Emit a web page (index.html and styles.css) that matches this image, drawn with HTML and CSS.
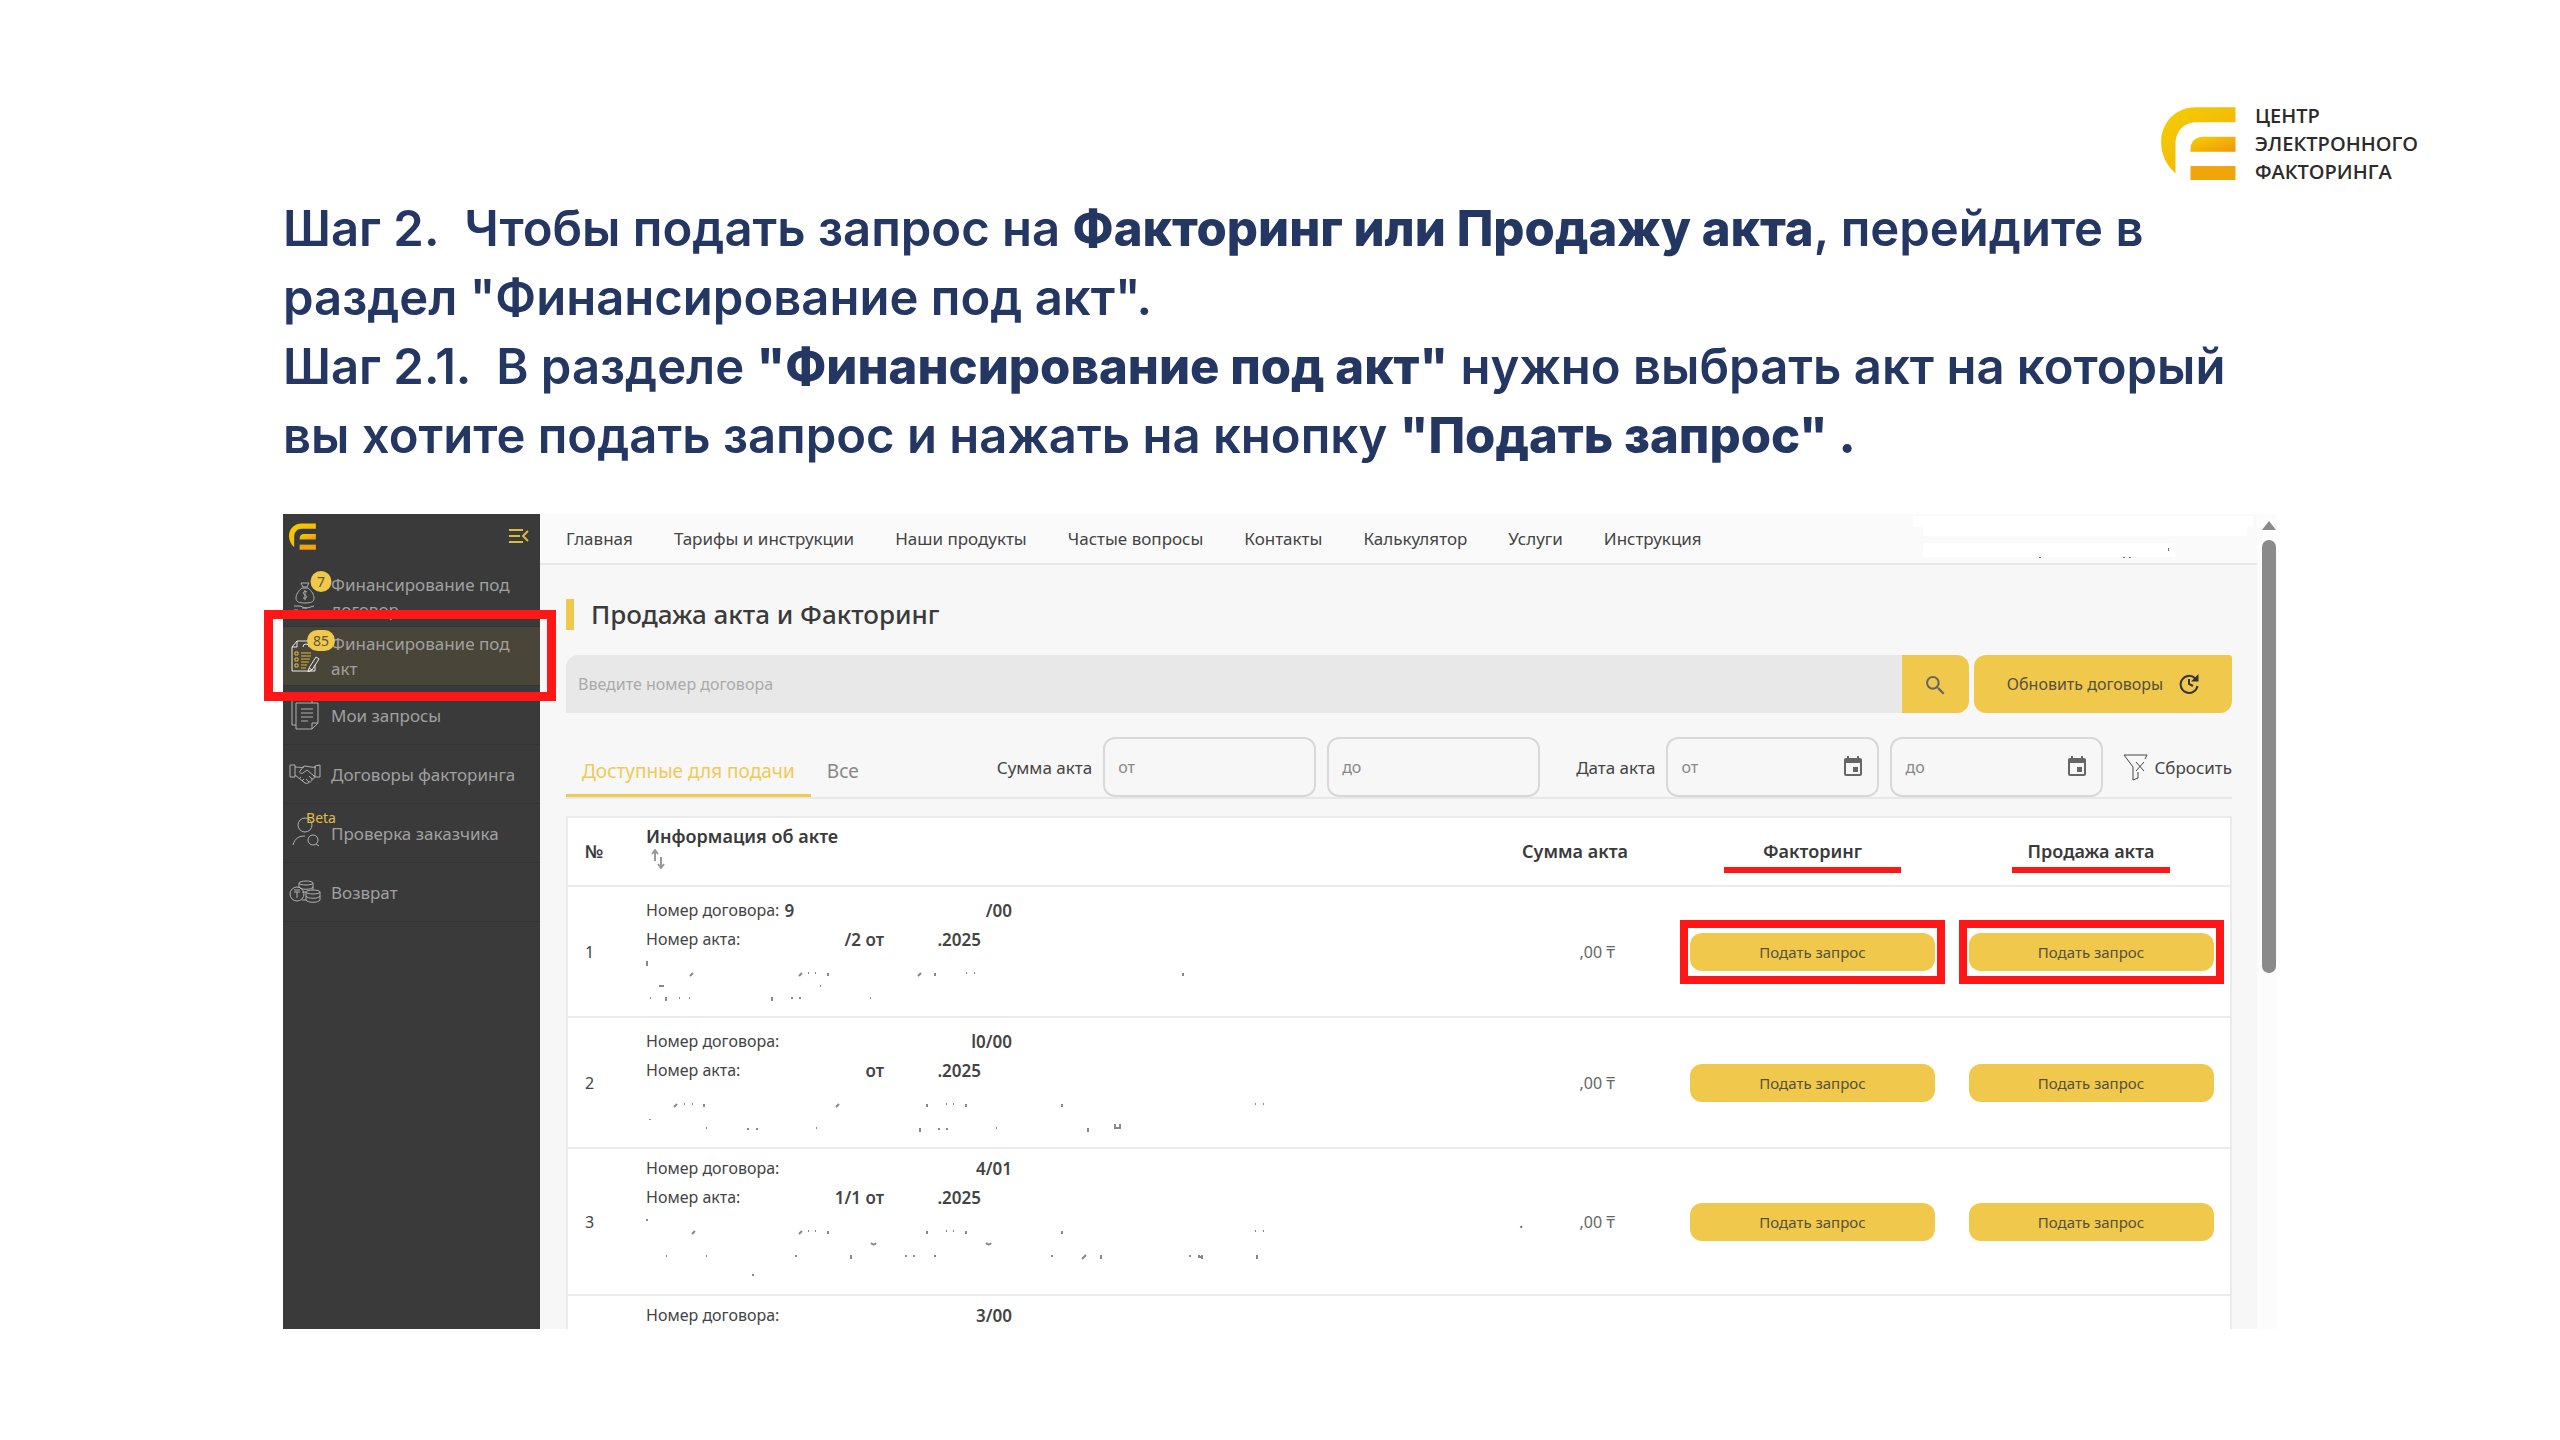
FILE: index.html
```html
<!DOCTYPE html>
<html lang="ru">
<head>
    <meta charset="UTF-8">
    <meta name="viewport" content="width=device-width, initial-scale=1.0">
    <title>Финансирование под акт</title>
    <link rel="stylesheet" href="styles.css">
</head>
<body>

    <!-- общие фигуры -->
    <svg class="defs" aria-hidden="true">
        <defs>
            <linearGradient id="gold" x1="0" y1="0" x2="1" y2="1">
                <stop offset="0" stop-color="#f7d000"/>
                <stop offset="1" stop-color="#ee960f"/>
            </linearGradient>
            <linearGradient id="goldArc" x1="0" y1="0" x2="1" y2="1">
                <stop offset="0" stop-color="#f5cd02"/>
                <stop offset="1" stop-color="#f1b00c"/>
            </linearGradient>
        </defs>
        <symbol id="logo" viewBox="62 51 224 219">
            <path fill="url(#goldArc)" d="M285 52H165C105 52 62 98 62 157c0 38 17 71 43 93v-88c0-37 25-65 62-65h118z"/>
            <path fill="url(#gold)" d="M150 185v-8c0-22 15-37 37-37h98v45z"/>
            <path fill="#f1a50c" d="M150 228h135v42H150z"/>
        </symbol>
        <symbol id="calendar" viewBox="0 0 24 24">
            <path d="M17 12h-5v5h5v-5zM16 1v2H8V1H6v2H5c-1.110 0-2 .9-2 2v14a2 2 0 0 0 2 2h14c1.100 0 2-.9 2-2V5c0-1.100-.9-2-2-2h-1V1h-2zm3 18H5V8h14v11z"/>
        </symbol>
    </svg>

    <header class="brand">
        <svg class="brand-logo"><use href="#logo"/></svg>
        <div class="brand-name">ЦЕНТР<br>ЭЛЕКТРОННОГО<br>ФАКТОРИНГА</div>
    </header>

    <section class="steps">
        <p>Шаг 2.&nbsp; Чтобы подать запрос на <b>Факторинг или Продажу акта</b>, перейдите в<br>раздел "Финансирование под акт".</p>
        <p>Шаг 2.1.&nbsp; В разделе <b>"Финансирование под акт"</b> нужно выбрать акт на который<br>вы хотите подать запрос и нажать на кнопку <b>"Подать запрос" .</b></p>
    </section>

    <div class="app-wrap">
        <div class="app">
            <aside class="sidebar">
                <div class="sidebar-top">
                    <svg class="sidebar-logo"><use href="#logo"/></svg>
                    <button class="collapse" aria-label="Свернуть меню">
                        <svg viewBox="0 0 20 14" width="20" height="14"><path d="M0 1h14M0 7h11M0 13h14M19 2l-5 5 5 5" fill="none" stroke="#dcb844" stroke-width="2"/></svg>
                    </button>
                </div>
                <a class="side-item" href="#">
                    <svg class="side-icon" viewBox="0 0 32 32">
                        <path d="M12 2h8l-2 4h-4zM13 7h6c4 3 6 7 6 10 0 4-3 5-9 5s-9-1-9-5c0-3 2-7 6-10zM18 11c-4-2-5 2-2 3s2 4-2 3M16 9v10M5 25h5c3 0 4 2 8 2h-5M18 27l7-2M5 29h4"/>
                    </svg>
                    <span class="badge">7</span>
                    <span>Финансирование под договор</span>
                </a>
                <a class="side-item active" href="#">
                    <svg class="side-icon" viewBox="0 0 32 32">
                        <path d="M8 1h15M8 1L3 7v24h23v-6M8 1v6H3M14 7a3 3 0 0 1 6 0M27 17l-7 11-1 4 4-2 7-11zM20 28l3 2"/>
                        <path class="gold-line" d="M6 12h3v3H6zM6 18h3v3H6zM6 24h3v3H6zM12 13h10M12 16h10M12 19h9M12 22h8M12 25h6M12 28h5"/>
                    </svg>
                    <span class="badge">85</span>
                    <span>Финансирование под акт</span>
                </a>
                <a class="side-item" href="#">
                    <svg class="side-icon" viewBox="0 0 32 32">
                        <path d="M7 4h22v20l-6 6H7zM29 24h-6v6M7 26H3V1h20v3M12 10h12M12 14h12M12 18h12M12 22h7"/>
                    </svg>
                    <span>Мои запросы</span>
                </a>
                <a class="side-item" href="#">
                    <svg class="side-icon" viewBox="0 0 32 32">
                        <path d="M1 7h5v12H1zM26 8l5-1v12h-5zM6 9c4 0 6 1 9 0M6 17l10 8c2 1 4 0 4-1 2 0 3-1 3-3 2 0 3-1 2-3l-7-6-4 3c-2 1-4 0-3-2l4-5c4 0 8 2 12 1M25 18h1M17 21l3 3M20 18l3 3M10 21l2-2M13 23l2-2"/>
                    </svg>
                    <span>Договоры факторинга</span>
                </a>
                <a class="side-item" href="#">
                    <svg class="side-icon" viewBox="0 0 32 32">
                        <circle cx="16" cy="8" r="7"/><path d="M4 28c2-7 6-9 12-9"/><circle cx="24" cy="23" r="5"/><path d="M27 27l3 2"/>
                    </svg>
                    <span class="beta">Beta</span>
                    <span>Проверка заказчика</span>
                </a>
                <a class="side-item" href="#">
                    <svg class="side-icon" viewBox="0 0 32 32">
                        <circle cx="8" cy="18" r="7"/><path d="M5 14h6M5 16h6M8 16v6"/>
                        <ellipse cx="17" cy="7" rx="7" ry="2"/><path d="M10 7v4c1 3 13 3 14 0V7M24 11v3M13 16h4"/>
                        <ellipse cx="24" cy="16" rx="7" ry="2"/><path d="M17 16v8c1 3 13 3 14 0v-8M17 20c1 3 13 3 14 0M13 24h4"/>
                    </svg>
                    <span>Возврат</span>
                </a>
            </aside>

            <main class="main">
                <nav class="topnav">
                    <a href="#">Главная</a>
                    <a href="#">Тарифы и инструкции</a>
                    <a href="#">Наши продукты</a>
                    <a href="#">Частые вопросы</a>
                    <a href="#">Контакты</a>
                    <a href="#">Калькулятор</a>
                    <a href="#">Услуги</a>
                    <a href="#">Инструкция</a>
                    <svg class="account" viewBox="0 0 340 42" width="340" height="42" aria-hidden="true">
                        <path fill="#fff" d="M0 0h340v11h-6v9H10v-9H0zM10 27h252v14H10z"/>
                        <path fill="#777" d="M126 41h2v1h-2zM210 41h2v1h-2zM216 41h2v1h-2zM255 32h1v3h-1z"/>
                    </svg>
                </nav>

                <div class="content">
                    <h1 class="title">Продажа акта и Факторинг</h1>

                    <div class="search-row">
                        <div class="search">
                            <input type="text" aria-label="Номер договора" placeholder="Введите номер договора">
                            <button class="search-btn" aria-label="Найти">
                                <svg viewBox="3 3 18 18" width="19" height="19"><path d="M15.500 14h-.79l-.28-.27A6.470 6.470 0 0 0 16 9.500 6.500 6.500 0 1 0 9.500 16c1.610 0 3.090-.59 4.230-1.570l.27.28v.79l5 4.990L20.490 19l-4.990-5zm-6 0C7.010 14 5 11.990 5 9.500S7.010 5 9.500 5 14 7.010 14 9.500 11.990 14 9.500 14z"/></svg>
                            </button>
                        </div>
                        <button class="update-btn">Обновить договоры
                            <svg viewBox="0 0 20 20" width="20" height="20"><path d="M16 4.200A8.500 8.500 0 1 0 18.500 12M10 5v5l4 2" fill="none" stroke="#333" stroke-width="2"/><path d="M19.500 0v7.500H12z" fill="#333"/></svg>
                        </button>
                    </div>

                    <div class="filters">
                        <div class="tabs">
                            <button class="tab selected">Доступные для подачи</button>
                            <button class="tab">Все</button>
                        </div>
                        <div class="range">
                            <label for="sumFrom">Сумма акта</label>
                            <div class="field"><input id="sumFrom" type="text" placeholder="от"></div>
                            <div class="field"><input type="text" aria-label="Сумма до" placeholder="до"></div>
                        </div>
                        <div class="range">
                            <label for="dateFrom">Дата акта</label>
                            <div class="field"><input id="dateFrom" type="text" placeholder="от"><svg class="cal"><use href="#calendar"/></svg></div>
                            <div class="field"><input type="text" aria-label="Дата до" placeholder="до"><svg class="cal"><use href="#calendar"/></svg></div>
                        </div>
                        <button class="reset">
                            <svg viewBox="0 0 25 27" width="25" height="27"><path d="M22 5l2-4H1l9 12v13l5-2v-6M13 8l8 9M21 8l-8 9" fill="none" stroke="#444"/></svg>
                            Сбросить
                        </button>
                    </div>

                    <table class="acts">
                        <colgroup><col class="c-num"><col><col class="c-sum"><col class="c-act"><col class="c-act"></colgroup>
                        <thead>
                            <tr>
                                <th>№</th>
                                <th class="sortable">Информация об акте
                                    <svg class="sort" viewBox="0 0 14 20" width="14" height="20"><path d="M4 12V2M1 5l3-4 3 4M10 8v10M7 15l3 4 3-4" fill="none" stroke="#999" stroke-width="2"/></svg>
                                </th>
                                <th class="center">Сумма акта</th>
                                <th class="center"><span class="mark mark-wide">Факторинг</span></th>
                                <th class="center"><span class="mark">Продажа акта</span></th>
                            </tr>
                        </thead>
                        <tbody>
                            <tr>
                                <td>1</td>
                                <td class="info">
                                    <div class="line"><span>Номер договора:</span><b class="lead">9</b><b class="no">/00</b></div>
                                    <div class="line"><span>Номер акта:</span><b class="act">/2 от</b><b class="date">.2025</b></div>
                                    <svg class="specks" viewBox="0 0 640 50" height="50" width="640"><path d="M1 5v5M44 20l3-3M153 20l3-3M162 17h1M169 17h1M182 17v3M272 20l3-3M289 17v3M320 17h1M328 17h1M537 17v3M13 30h5M174 30h1M20 41v4M126 41v4M145 42h2M153 42h2M4 42h1M33 42h1M43 42h1M224 42h1"/></svg>
                                </td>
                                <td><div class="sum">,00 ₸</div></td>
                                <td class="center"><div class="callout"><button class="send">Подать запрос</button></div></td>
                                <td class="center"><div class="callout"><button class="send">Подать запрос</button></div></td>
                            </tr>
                            <tr>
                                <td>2</td>
                                <td class="info">
                                    <div class="line"><span>Номер договора:</span><b class="no">l0/00</b></div>
                                    <div class="line"><span>Номер акта:</span><b class="act">от</b><b class="date">.2025</b></div>
                                    <svg class="specks" viewBox="0 0 640 50" height="50" width="640"><path d="M28 20l3-3M38 17h1M46 17h1M58 17v3M190 20l3-3M281 17v3M300 17h1M307 17h1M320 17v3M416 17v3M609 17h1M617 17h1M4 32v1M102 41v2M111 41v2M274 41v4M293 41v2M301 41v2M442 41v4M469 37v4h5v-4M60 41h1M170 41h1M350 41h1"/></svg>
                                </td>
                                <td><div class="sum">,00 ₸</div></td>
                                <td class="center"><button class="send">Подать запрос</button></td>
                                <td class="center"><button class="send">Подать запрос</button></td>
                            </tr>
                            <tr class="tall">
                                <td>3</td>
                                <td class="info">
                                    <div class="line"><span>Номер договора:</span><b class="no">4/01</b></div>
                                    <div class="line"><span>Номер акта:</span><b class="act">1/1 от</b><b class="date">.2025</b></div>
                                    <svg class="specks" viewBox="0 0 640 70" height="70" width="640"><path d="M1 5v2M46 20l3-3M153 20l3-3M162 17h1M169 17h1M182 17v3M281 17v3M300 17h1M307 17h1M320 17v3M416 17v3M609 17h1M617 17h1M225 29q3 3 5 0M340 29q3 3 5 0M150 41v2M205 41v4M260 41v2M268 41v2M289 41v2M406 41v2M436 45l4-4M455 41v4M544 41v2M553 41v2h3v-2v4M611 41v4M107 60v2M20 42h1M60 42h1"/></svg>
                                </td>
                                <td><div class="sum"><span>.</span>,00 ₸</div></td>
                                <td class="center"><button class="send">Подать запрос</button></td>
                                <td class="center"><button class="send">Подать запрос</button></td>
                            </tr>
                            <tr class="tall">
                                <td></td>
                                <td class="info">
                                    <div class="line"><span>Номер договора:</span><b class="no">3/00</b></div>
                                </td>
                                <td></td>
                                <td></td>
                                <td></td>
                            </tr>
                        </tbody>
                    </table>
                </div>
            </main>

            <div class="scrollbar" aria-hidden="true">
                <div class="arrow"></div>
                <div class="thumb"></div>
            </div>
        </div>
        <div class="callout-menu"></div>
    </div>

</body>
</html>
```
FILE: styles.css
```css
* {
    box-sizing: border-box;
}

body {
    margin: 0;
    height: 100vh;
    padding-bottom: 111px;
    display: flex;
    flex-direction: column;
    background-color: #fff;
    color: #444;
    font-family: 'Noto Sans', 'Open Sans', sans-serif;
    font-size: 16px;
}

a {
    color: inherit;
    text-decoration: none;
}

button {
    border: none;
    padding: 0;
    background: none;
    color: inherit;
    font: inherit;
    cursor: pointer;
}

input {
    font: inherit;
    color: #444;
}

.defs {
    position: absolute;
    width: 0;
    height: 0;
}

/* шапка слайда */
.brand {
    display: flex;
    justify-content: flex-end;
    gap: 19px;
    padding: 102px 142px 0;
}

.brand-logo {
    width: 75px;
    height: 73px;
    margin-top: 5px;
}

.brand-name {
    color: #2f2b2a;
    font-family: 'Open Sans', sans-serif;
    font-size: 20px;
    font-weight: 600;
    line-height: 28px;
}

.steps {
    margin: 8px 283px 44px;
    color: #243763;
    font-family: Inter, sans-serif;
    font-size: 49px;
    font-weight: 600;
    line-height: 69px;
    white-space: nowrap;
}

.steps p {
    margin: 0;
}

.steps b {
    font-weight: 800;
}

/* окно приложения */
.app-wrap {
    position: relative;
    flex: 1;
    min-height: 0;
    margin: 0 283px;
}

.app {
    display: flex;
    height: 100%;
    overflow: hidden;
    background-color: #f7f7f7;
}

.sidebar {
    flex: 0 0 257px;
    background-color: #3a3a3a;
    color: #a0a0a0;
    font-size: 17px;
    line-height: 25px;
}

.sidebar-top {
    display: flex;
    justify-content: space-between;
    align-items: center;
    height: 54px;
    padding: 0 11px 10px 6px;
}

.sidebar-logo {
    width: 27px;
    height: 27px;
}

.collapse {
    display: flex;
}

.side-item {
    position: relative;
    display: flex;
    align-items: center;
    gap: 10px;
    height: 59px;
    padding: 0 12px 0 6px;
    border-bottom: 1px solid #333;
}

.side-item.active {
    background-color: #494538;
}

.side-icon {
    flex: none;
    width: 32px;
    height: 32px;
    fill: none;
    stroke: #b0b0b0;
}

.active .side-icon {
    stroke: #e8e8e8;
}

.active .side-icon .gold-line {
    stroke: #e0bb45;
}

.badge,
.beta {
    position: absolute;
    top: 3px;
    left: 38px;
    transform: translateX(-50%);
    font-size: 14px;
    line-height: 21px;
}

.badge {
    min-width: 21px;
    padding: 0 6px;
    border-radius: 11px;
    background-color: #f0c94c;
    color: #5d5433;
    text-align: center;
}

.beta {
    color: #e0bb45;
}

.main {
    flex: 1;
    min-width: 0;
}

.topnav {
    display: flex;
    align-items: center;
    gap: 41px;
    height: 51px;
    padding: 0 4px 0 26px;
    border-bottom: 2px solid #e8e8e8;
    background-color: #fafafa;
    font-size: 17px;
    white-space: nowrap;
}

.account {
    margin: 2px 0 6px auto;
}

.content {
    padding: 34px 25px 0 26px;
}

.title {
    margin: 0 0 25px;
    padding-left: 17px;
    border-left: 8px solid #f0c94c;
    color: #3a3a3a;
    font-size: 26px;
    font-weight: 500;
    line-height: 31px;
}

.search-row {
    display: flex;
    gap: 5px;
    height: 58px;
}

.search {
    flex: 1;
    display: flex;
    border-radius: 12px 12px 12px 0;
    overflow: hidden;
}

.search input {
    flex: 1;
    padding: 0 12px;
    border: none;
    background-color: #e8e8e8;
}

::placeholder {
    color: #aaa;
    opacity: 1;
}

.search-btn {
    width: 67px;
    background-color: #f0c94c;
    fill: #666;
}

.search-btn svg {
    vertical-align: middle;
}

.update-btn {
    display: flex;
    align-items: center;
    justify-content: center;
    gap: 16px;
    width: 258px;
    border-radius: 12px 3px 12px 12px;
    background-color: #f0c94c;
    color: #55503c;
}

.filters {
    display: flex;
    height: 62px;
    margin: 24px 0 17px;
    border-bottom: 2px solid #e8e8e8;
}

.tabs {
    display: flex;
    flex: 1;
}

.tab {
    padding: 10px 16px 0;
    color: #888;
    font-size: 19px;
    border-bottom: 3px solid transparent;
}

.tab.selected {
    border-color: #efca55;
    color: #efca55;
}

.range {
    display: flex;
    align-items: center;
    gap: 11px;
    margin-right: 20px;
}

.range + .range {
    margin-left: 16px;
}

.range label,
.reset {
    font-size: 17px;
}

.field {
    display: flex;
    align-items: center;
    width: 213px;
    height: 60px;
    padding: 0 12px 0 13px;
    border: 2px solid #d8d8d8;
    border-radius: 12px;
}

.field input {
    flex: 1;
    min-width: 0;
    padding: 0;
    border: none;
    background: none;
}

.field ::placeholder {
    color: #888;
}

.cal {
    width: 24px;
    height: 24px;
    fill: #666;
}

.reset {
    display: flex;
    align-items: center;
    gap: 6px;
}

.acts {
    width: 100%;
    table-layout: fixed;
    border-collapse: collapse;
    border: 2px solid #ebebeb;
    background-color: #fff;
}

.c-num { width: 62px; }
.c-sum { width: 196px; }
.c-act { width: 279px; }

.acts th {
    height: 69px;
    padding: 0 17px;
    color: #3a3a3a;
    font-size: 18px;
    font-weight: 600;
    line-height: 25px;
    text-align: left;
}

.acts .sortable {
    padding-bottom: 10px;
}

.acts tr {
    border-bottom: 2px solid #ebebeb;
}

.acts td {
    height: 131px;
    padding: 0 17px;
}

.acts .tall td {
    height: 147px;
}

.acts .center {
    padding: 0;
    text-align: center;
}

.sort {
    display: block;
    margin-left: 5px;
}

/* красная черта под заголовком столбца */
.mark {
    position: relative;
}

.mark::after {
    content: "";
    position: absolute;
    left: -16px;
    right: -16px;
    bottom: -10px;
    height: 6px;
    background-color: #ff1616;
}

.mark-wide::after {
    left: -39px;
    right: -39px;
}

.acts .info {
    padding-top: 9px;
    vertical-align: top;
}

.acts .tall .info {
    padding-top: 5px;
}

.line {
    position: relative;
    display: flex;
    width: 366px;
    line-height: 29px;
}

.line b {
    font-size: 17px;
    font-weight: 600;
}

.line .lead {
    margin-left: 5px;
}

.no {
    margin-left: auto;
}

.line .act,
.line .date {
    position: absolute;
    right: 128px;
}

.line .date {
    right: 31px;
}

.specks {
    display: block;
    margin-top: 2px;
    fill: none;
    stroke: #888;
    stroke-width: 2;
}

.sum {
    display: flex;
    justify-content: flex-end;
    width: 96px;
    margin-left: 25px;
    color: #666;
}

.sum span {
    margin-right: auto;
}

.send {
    width: 245px;
    height: 38px;
    border-radius: 12px;
    background-color: #f0c94c;
    color: #55503c;
    font-size: 15px;
}

.callout {
    display: inline-block;
    margin: 0 auto;
    padding: 5px 2px;
    border: 8px solid #ff1616;
}

.callout-menu {
    position: absolute;
    top: 96px;
    left: -19px;
    width: 292px;
    height: 91px;
    border: 9px solid #ff1616;
}

.scrollbar {
    flex: 0 0 20px;
    padding: 7px 1px 0 5px;
    background-color: #fcfcfc;
}

.arrow {
    height: 9px;
    border: 7px solid transparent;
    border-top: none;
    border-bottom: 9px solid #8a8a8a;
}

.thumb {
    height: 433px;
    margin-top: 10px;
    border-radius: 7px;
    background-color: #8a8a8a;
}
```
